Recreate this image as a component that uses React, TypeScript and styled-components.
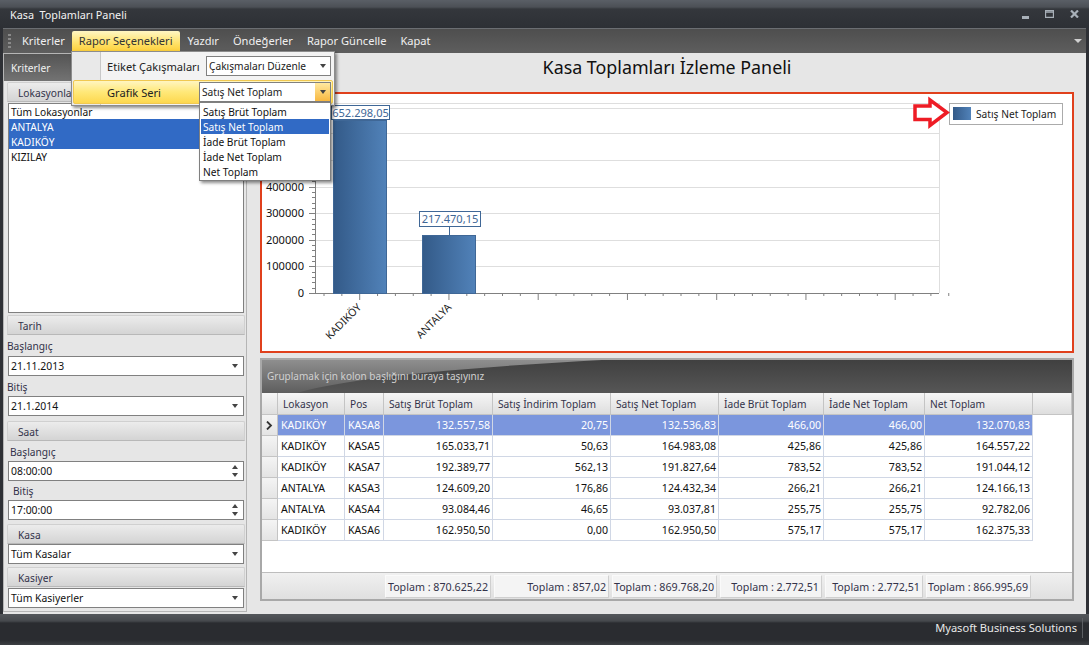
import React from "react"
import styled, { createGlobalStyle } from "styled-components"

const GlobalStyle = createGlobalStyle`
  html, body { margin: 0; padding: 0; background: #2e3035; }
  * { box-sizing: border-box; }
  body { font-family: "Noto Sans", "Liberation Sans", sans-serif; font-size: 10.2px; color: #111; }
`

const Frame = styled.div`
  width: 1089px;
  height: 645px;
  display: flex;
  flex-direction: column;
  overflow: hidden;
  position: relative;
  background: #2e3035;
`

const TitleBar = styled.div`
  height: 28px;
  flex: none;
  display: flex;
  align-items: center;
  justify-content: space-between;
  padding: 0 10px;
  color: #f2f2f2;
  font-size: 10.8px;
  background: linear-gradient(#5a5f66 0, #4c5056 7px, #34373c 9px, #2d3035 100%);
`

const WindowButtons = styled.div`
  display: flex;
  gap: 16px;
  align-items: center;
  color: #a8b0b8;
`

const MenuBar = styled.div`
  height: 25px;
  flex: none;
  margin: 0 3px;
  display: flex;
  align-items: center;
  padding-left: 5px;
  color: #f0f0f0;
  font-size: 11.1px;
  position: relative;
  background: linear-gradient(#4e4e4e, #5e5e5e);
  border-top: 1px solid #6b6e72;
`

const Grip = styled.div`
  width: 3px;
  height: 15px;
  margin-right: 4px;
  background: repeating-linear-gradient(#8a8a8a 0 2px, transparent 2px 4px);
`

const MenuItem = styled.div<{ $open?: boolean }>`
  height: 20px;
  line-height: 19px;
  padding: 0 7px;
  margin-right: ${p => (p.$open ? "1px" : "0")};
  white-space: nowrap;
  color: ${p => (p.$open ? "#333" : "#f0f0f0")};
  background: ${p => (p.$open ? "linear-gradient(#fff6c4, #ffe26a 60%, #fdd03c)" : "none")};
  border-radius: ${p => (p.$open ? "2px 2px 0 0" : "0")};
`

const Overflow = styled.div`
  margin-left: auto;
  margin-right: 4px;
  width: 0;
  height: 0;
  border: 4px solid transparent;
  border-top-color: #d0d0d0;
  border-bottom: 0;
`

const Body = styled.div`
  flex: 1;
  margin: 0 3px;
  display: flex;
  background: #e6e6e6;
  position: relative;
  min-height: 0;
`

const Sidebar = styled.div`
  width: 244px;
  flex: none;
  margin: 0 0 2px 0;
  border: 1px solid #b5b5b5;
  display: flex;
  flex-direction: column;
`

const SideHead = styled.div`
  height: 27px;
  line-height: 28px;
  padding-left: 7px;
  color: #f2f2f2;
  background: linear-gradient(#545454, #737373);
  margin-bottom: 1px;
  flex: none;
`

const GroupHead = styled.div`
  height: 20px;
  line-height: 20px;
  margin: 0 1px 0 3px;
  padding-left: 10px;
  color: #33334a;
  background: linear-gradient(#ececec, #d4d4d4);
  border: 1px solid #d0d0d0;
  border-bottom-color: #b8b8b8;
  border-radius: 2px 2px 0 0;
  flex: none;
`

const Group = styled.div<{ $gap: number }>`
  display: flex;
  flex-direction: column;
  margin-bottom: ${p => p.$gap}px;
`

const ListBox = styled.div`
  height: 210px;
  margin: 1px 2px 0 4px;
  background: #fff;
  border: 1px solid #808080;
`

const ListRow = styled.div<{ $on?: boolean }>`
  height: 15px;
  line-height: 17px;
  padding-left: 2px;
  color: ${p => (p.$on ? "#fff" : "#111")};
  background: ${p => (p.$on ? "#316ac5" : "transparent")};
`

const FieldLabel = styled.div<{ $indent?: number; $h?: number }>`
  height: ${p => p.$h ?? 20}px;
  line-height: ${p => (p.$h ?? 20) + 2}px;
  padding-left: ${p => p.$indent ?? 3}px;
  color: #33334a;
`

const Input = styled.div<{ $top?: number }>`
  height: 20px;
  margin: ${p => p.$top ?? 0}px 2px 0 4px;
  background: #fff;
  border: 1px solid #808080;
  display: flex;
  align-items: center;
  justify-content: space-between;
  padding: 0 5px 0 2px;
  font-size: 10.4px;
  flex: none;
`

const Caret = styled.span<{ $up?: boolean }>`
  display: block;
  width: 0;
  height: 0;
  border-left: 3.5px solid transparent;
  border-right: 3.5px solid transparent;
  ${p => (p.$up ? "border-bottom: 4px solid #444;" : "border-top: 4px solid #444;")}
`

const Spin = styled.span`
  display: flex;
  flex-direction: column;
  gap: 4px;
`

const Main = styled.div`
  flex: 1;
  min-width: 0;
  display: flex;
  flex-direction: column;
  padding: 0 12px 0 13px;
`

const PageTitle = styled.div`
  height: 39px;
  flex: none;
  text-align: center;
  font-size: 17.85px;
  line-height: 28px;
  color: #111;
`

const ChartPanel = styled.div`
  height: 261px;
  flex: none;
  background: #fff;
  border: 2px solid #e0401c;
`

const ChartSvg = styled.svg`
  display: block;
  width: 810px;
  height: 257px;
  font-family: "Noto Sans", "Liberation Sans", sans-serif;
  font-size: 11.1px;
`

const GridPanel = styled.div`
  height: 243px;
  flex: none;
  margin-top: 5px;
  border: 2px solid #a8a8a8;
  background: #fff;
  display: flex;
  flex-direction: column;
`

const GroupBar = styled.div`
  height: 33px;
  flex: none;
  position: relative;
  overflow: hidden;
  background: linear-gradient(#404040, #565656);
  color: #d0d0d0;
  font-size: 10px;
  line-height: 33px;
  padding-left: 5px;

  &::before {
    content: "";
    position: absolute;
    inset: 0;
    background: linear-gradient(#8e8e8e, #5e5e5e);
    clip-path: path("M0 0 H340 C 230 6, 90 16, 35 33 H0 Z");
  }
`

const GroupBarText = styled.span`
  position: relative;
`

const Columns = "16px 67px 39px 109px 118px 108px 105px 101px 108px 39px"

const GridRow = styled.div`
  display: grid;
  grid-template-columns: ${Columns};
  flex: none;
`

const HeadCell = styled.div`
  height: 22px;
  line-height: 22px;
  padding-left: 5px;
  white-space: nowrap;
  color: #33334a;
  background: linear-gradient(#f6f6f6, #dedede);
  border-right: 1px solid #c4c4c4;
  border-bottom: 1px solid #c4c4c4;
`

const Cell = styled.div<{ $on?: boolean; $num?: boolean }>`
  height: 21px;
  line-height: 20px;
  padding: 0 2px 0 3px;
  font-size: 10.6px;
  white-space: nowrap;
  text-align: ${p => (p.$num ? "right" : "left")};
  color: ${p => (p.$on ? "#fff" : "#111")};
  background: ${p => (p.$on ? "#7b96dd" : "#fff")};
  border-right: 1px solid #d0d7e5;
  border-bottom: 1px solid #d0d7e5;
`

const RowMark = styled.div`
  height: 21px;
  background: linear-gradient(#f4f4f4, #e4e4e4);
  border-right: 1px solid #c4c4c4;
  border-bottom: 1px solid #c4c4c4;
  display: flex;
  align-items: center;
  justify-content: center;
`

const GridFill = styled.div`
  flex: 1;
`

const FooterRow = styled.div`
  height: 27px;
  flex: none;
  display: grid;
  grid-template-columns: 122px 109px 118px 108px 105px 101px 108px;
  align-items: center;
  background: linear-gradient(#f0f0f0, #e0e0e0);
  border-top: 1px solid #bdbdbd;
`

const FooterCell = styled.div`
  height: 23px;
  line-height: 22px;
  margin: 0 2px 0 1px;
  padding-right: 2px;
  font-size: 10.7px;
  text-align: right;
  white-space: nowrap;
  color: #33334a;
  background: #f4f4f4;
  border: 1px solid #fafafa;
  border-right-color: #cfcfcf;
  border-bottom-color: #cfcfcf;
`

const FooterBlank = styled.div``

const StatusBar = styled.div`
  height: 31px;
  flex: none;
  color: #e8e8e8;
  font-size: 11.1px;
  display: flex;
  justify-content: flex-end;
  padding: 4px 6px 0 0;
  background: linear-gradient(#54575b 0, #46494d 7px, #2a2c30 9px, #2a2c30 26px, #3c3f43 100%);
`

const StatusText = styled.div`
  height: 20px;
  line-height: 20px;
  padding-right: 5px;
  border-right: 1px solid #5c5f63;
`

// rapor secenekleri acilir menusu, sayfanin ustunde duruyor
const Popup = styled.div`
  position: absolute;
  left: 68px;
  top: -2px;
  width: 264px;
  height: 55px;
  background: #f3f3f3;
  border: 1px solid #8c8c8c;
  box-shadow: 2px 2px 3px rgba(0, 0, 0, 0.45);
  z-index: 5;
`

const PopupStripe = styled.div`
  position: absolute;
  left: 0;
  top: 0;
  bottom: 0;
  width: 29px;
  background: #e9e9e9;
  border-right: 1px solid #c8c8c8;
`

const PopupRow = styled.div<{ $on?: boolean }>`
  position: relative;
  height: ${p => (p.$on ? "24px" : "20px")};
  margin: ${p => (p.$on ? "4px 1px 0" : "4px 0 0")};
  padding-left: ${p => (p.$on ? "33px" : "35px")};
  display: flex;
  align-items: center;
  justify-content: space-between;
  color: #222;
  font-size: 11.1px;
  background: ${p => (p.$on ? "linear-gradient(#fff5c0, #ffe878 50%, #fdd84e)" : "transparent")};
  border: ${p => (p.$on ? "1px solid #f0c850" : "0")};
  border-radius: 2px;
`

const Combo = styled.div<{ $w: number; $on?: boolean }>`
  width: ${p => p.$w}px;
  height: 20px;
  margin-right: ${p => (p.$on ? "1px" : "3px")};
  background: #fff;
  border: 1px solid #808080;
  display: flex;
  align-items: center;
  justify-content: space-between;
  padding-left: 2px;
  font-size: 10.2px;
  white-space: nowrap;
`

const ComboBtn = styled.span<{ $on?: boolean }>`
  width: 15px;
  height: 18px;
  display: flex;
  align-items: center;
  justify-content: center;
  background: ${p => (p.$on ? "linear-gradient(#ffe9a0, #f8b840)" : "transparent")};
`

const ComboList = styled.div`
  position: absolute;
  left: 196px;
  top: 49px;
  width: 132px;
  height: 79px;
  background: #fff;
  border: 1px solid #808080;
  box-shadow: 2px 2px 3px rgba(0, 0, 0, 0.45);
  padding: 1px;
  z-index: 6;
`

const rows = [
  ["KADIKÖY", "KASA8", "132.557,58", "20,75", "132.536,83", "466,00", "466,00", "132.070,83"],
  ["KADIKÖY", "KASA5", "165.033,71", "50,63", "164.983,08", "425,86", "425,86", "164.557,22"],
  ["KADIKÖY", "KASA7", "192.389,77", "562,13", "191.827,64", "783,52", "783,52", "191.044,12"],
  ["ANTALYA", "KASA3", "124.609,20", "176,86", "124.432,34", "266,21", "266,21", "124.166,13"],
  ["ANTALYA", "KASA4", "93.084,46", "46,65", "93.037,81", "255,75", "255,75", "92.782,06"],
  ["KADIKÖY", "KASA6", "162.950,50", "0,00", "162.950,50", "575,17", "575,17", "162.375,33"],
]

const headers = ["Lokasyon", "Pos", "Satış Brüt Toplam", "Satış İndirim Toplam", "Satış Net Toplam", "İade Brüt Toplam", "İade Net Toplam", "Net Toplam"]
const totals = ["870.625,22", "857,02", "869.768,20", "2.772,51", "2.772,51", "866.995,69"]
const yTicks = [0, 100000, 200000, 300000, 400000, 500000, 600000]

function Chart() {
  const yOf = (v: number) => 293 - (v / 100000) * 26.6
  return (
    <ChartSvg viewBox="262 94 810 257">
      <defs>
        <linearGradient id="bar" x1="0" x2="1" y1="0" y2="0">
          <stop offset="0" stopColor="#335a88" />
          <stop offset="1" stopColor="#5182b9" />
        </linearGradient>
      </defs>
      <g stroke="#dedede" strokeWidth="1">
        <line x1="315" x2="939" y1="103.5" y2="103.5" />
        <line x1="315" x2="939" y1="108.5" y2="108.5" />
        {yTicks.slice(1).map(v => (
          <line key={v} x1="315" x2="939" y1={Math.round(yOf(v)) + 0.5} y2={Math.round(yOf(v)) + 0.5} />
        ))}
        <line x1="939.5" x2="939.5" y1="103" y2="293" />
      </g>
      <g stroke="#808080" strokeWidth="1">
        <line x1="315.5" x2="315.5" y1="103" y2="293" />
        <line x1="315" x2="939" y1="293.5" y2="293.5" />
        {Array.from({ length: 36 }, (_, i) => (
          <line key={i} x1={324 + i * 17.85} x2={324 + i * 17.85} y1="293" y2={i % 5 === 2 ? 300 : 296} />
        ))}
        {Array.from({ length: 36 }, (_, i) => (
          <line key={i} x1={i % 5 === 0 ? 309 : 312} x2="315" y1={Math.round(293 - i * 5.32) + 0.5} y2={Math.round(293 - i * 5.32) + 0.5} />
        ))}
      </g>
      <g fill="#111" textAnchor="end">
        {yTicks.slice(0, 5).map(v => (
          <text key={v} x="304" y={yOf(v) + 4}>{v}</text>
        ))}
      </g>
      <rect x="333.5" y="120.5" width="53" height="173" fill="url(#bar)" stroke="#3f6796" />
      <rect x="422.5" y="235.5" width="53" height="58" fill="url(#bar)" stroke="#3f6796" />
      <line x1="449.5" x2="449.5" y1="226" y2="235" stroke="#3f6796" />
      <rect x="331.5" y="105.5" width="58" height="14" fill="#fff" stroke="#3f6796" />
      <rect x="419.5" y="211.5" width="61" height="15" fill="#fff" stroke="#3f6796" />
      <text x="360.5" y="116.5" fill="#3f6796" textAnchor="middle">652.298,05</text>
      <text x="450" y="223" fill="#3f6796" textAnchor="middle">217.470,15</text>
      <text transform="translate(362 308) rotate(-45)" textAnchor="end" fill="#222" fontSize="10.6">KADIKÖY</text>
      <text transform="translate(452 308) rotate(-45)" textAnchor="end" fill="#222" fontSize="10.6">ANTALYA</text>
      <rect x="949.5" y="103.5" width="113" height="21" fill="#fff" stroke="#ababab" />
      <rect x="953" y="107" width="18" height="13" fill="url(#bar)" />
      <text x="976" y="118" fill="#222" fontSize="10.2">Satış Net Toplam</text>
      <path d="M915 106h15v-6l17 12.500l-17 13v-6h-15z" fill="#fff" stroke="#ee1c25" strokeWidth="3.500" />
    </ChartSvg>
  )
}

export default function App() {
  return (
    <Frame>
      <GlobalStyle />
      <TitleBar>
        <span>Kasa&nbsp; Toplamları Paneli</span>
        <WindowButtons>
          <svg width="7" height="10" viewBox="0 0 7 10"><rect x="0" y="7" width="7" height="3" fill="#a8b0b8" /></svg>
          <svg width="9" height="8" viewBox="0 0 9 8"><path d="M0.500 0.500h8v7h-8zM0.500 2.200h8" fill="none" stroke="#a8b0b8" strokeWidth="1.300" /></svg>
          <svg width="9" height="8" viewBox="0 0 9 8"><path d="M1 0.500l7 7M8 0.500l-7 7" fill="none" stroke="#a8b0b8" strokeWidth="2.200" /></svg>
        </WindowButtons>
      </TitleBar>
      <MenuBar>
        <Grip />
        <MenuItem>Kriterler</MenuItem>
        <MenuItem $open>Rapor Seçenekleri</MenuItem>
        <MenuItem>Yazdır</MenuItem>
        <MenuItem>Öndeğerler</MenuItem>
        <MenuItem>Rapor Güncelle</MenuItem>
        <MenuItem>Kapat</MenuItem>
        <Overflow />
      </MenuBar>
      <Body>
        <Sidebar>
          <SideHead>Kriterler</SideHead>
          <Group $gap={2}>
            <GroupHead>Lokasyonlar</GroupHead>
            <ListBox>
              <ListRow>Tüm Lokasyonlar</ListRow>
              <ListRow $on>ANTALYA</ListRow>
              <ListRow $on>KADIKÖY</ListRow>
              <ListRow>KIZILAY</ListRow>
            </ListBox>
          </Group>
          <Group $gap={5}>
            <GroupHead>Tarih</GroupHead>
            <FieldLabel $h={21}>Başlangıç</FieldLabel>
            <Input>21.11.2013<Caret /></Input>
            <FieldLabel>Bitiş</FieldLabel>
            <Input>21.1.2014<Caret /></Input>
          </Group>
          <Group $gap={4}>
            <GroupHead>Saat</GroupHead>
            <FieldLabel $indent={6}>Başlangıç</FieldLabel>
            <Input>08:00:00<Spin><Caret $up /><Caret /></Spin></Input>
            <FieldLabel $indent={9} $h={19}>Bitiş</FieldLabel>
            <Input>17:00:00<Spin><Caret $up /><Caret /></Spin></Input>
          </Group>
          <Group $gap={3}>
            <GroupHead>Kasa</GroupHead>
            <Input>Tüm Kasalar<Caret /></Input>
          </Group>
          <Group $gap={0}>
            <GroupHead>Kasiyer</GroupHead>
            <Input $top={1}>Tüm Kasiyerler<Caret /></Input>
          </Group>
        </Sidebar>
        <Main>
          <PageTitle>Kasa Toplamları İzleme Paneli</PageTitle>
          <ChartPanel>
            <Chart />
          </ChartPanel>
          <GridPanel>
            <GroupBar>
              <GroupBarText>Gruplamak için kolon başlığını buraya taşıyınız</GroupBarText>
            </GroupBar>
            <GridRow>
              <HeadCell />
              {headers.map(h => (
                <HeadCell key={h}>{h}</HeadCell>
              ))}
              <HeadCell />
            </GridRow>
            {rows.map((row, i) => (
              <GridRow key={row[1]}>
                <RowMark>
                  {i === 0 && (
                    <svg width="7" height="9" viewBox="0 0 7 9"><path d="M1 0.500l4 4-4 4" fill="none" stroke="#333" strokeWidth="1.800" /></svg>
                  )}
                </RowMark>
                {row.map((v, j) => (
                  <Cell key={j} $on={i === 0} $num={j > 1}>{v}</Cell>
                ))}
              </GridRow>
            ))}
            <GridFill />
            <FooterRow>
              <FooterBlank />
              {totals.map((t, i) => (
                <FooterCell key={i}>Toplam : {t}</FooterCell>
              ))}
            </FooterRow>
          </GridPanel>
        </Main>
        <Popup>
          <PopupStripe />
          <PopupRow>
            Etiket Çakışmaları
            <Combo $w={125}>Çakışmaları Düzenle<ComboBtn><Caret /></ComboBtn></Combo>
          </PopupRow>
          <PopupRow $on>
            Grafik Seri
            <Combo $w={132} $on>Satış Net Toplam<ComboBtn $on><Caret /></ComboBtn></Combo>
          </PopupRow>
        </Popup>
        <ComboList>
          <ListRow>Satış Brüt Toplam</ListRow>
          <ListRow $on>Satış Net Toplam</ListRow>
          <ListRow>İade Brüt Toplam</ListRow>
          <ListRow>İade Net Toplam</ListRow>
          <ListRow>Net Toplam</ListRow>
        </ComboList>
      </Body>
      <StatusBar>
        <StatusText>Myasoft Business Solutions</StatusText>
      </StatusBar>
    </Frame>
  )
}
